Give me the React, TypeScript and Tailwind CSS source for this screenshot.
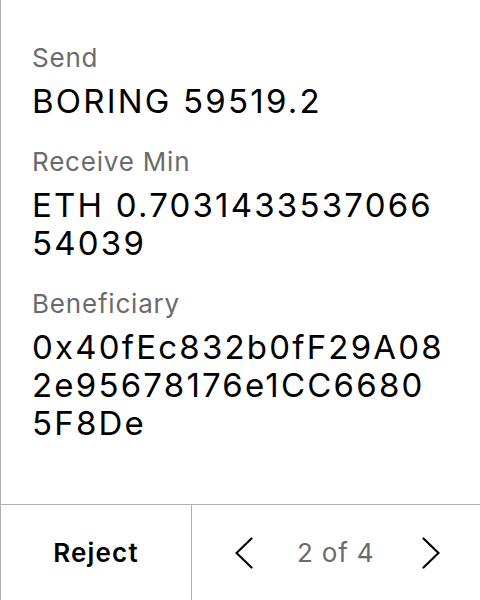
import React from "react";

function Field({ label, lines }: { label: string; lines: string[] }) {
  return (
    <div className="flex flex-col">
      <div className="text-[26px] leading-[31px] tracking-[0.8px] text-[#6b6b6b]">{label}</div>
      <div className="mt-[9px] text-[33px] leading-[38px] tracking-[2.2px] text-black">
        {lines.map((l) => (
          <div key={l}>{l}</div>
        ))}
      </div>
    </div>
  );
}

export default function App() {
  return (
    <div
      className="w-[480px] h-[600px] bg-white border-l border-[#b0b0b0] flex flex-col"
      style={{ fontFamily: "Inter, 'Noto Sans', sans-serif" }}
    >
      <div className="flex-1 flex flex-col gap-[26px] pl-[31px] pr-[20px] pt-[42px]">
        <Field label="Send" lines={["BORING 59519.2"]} />
        <Field label="Receive Min" lines={["ETH 0.7031433537066", "54039"]} />
        <Field label="Beneficiary" lines={["0x40fEc832b0fF29A08", "2e95678176e1CC6680", "5F8De"]} />
      </div>
      <div className="h-[96px] border-t border-[#b0b0b0] flex">
        <button className="w-[191px] h-full flex items-center justify-center text-[26px] font-semibold tracking-[1.2px] text-black border-r border-[#b0b0b0]">
          Reject
        </button>
        <div className="flex-1 flex items-center pl-[43px]">
          <svg width="18" height="32" viewBox="0 0 18 32" fill="none">
            <polyline points="16.5,1.5 1.5,16 16.5,30.5" stroke="black" strokeWidth="2.2" strokeLinecap="round" strokeLinejoin="miter" />
          </svg>
          <span className="ml-[44px] text-[26px] tracking-[0.8px] text-[#6b6b6b]">2 of 4</span>
          <svg className="ml-[48px]" width="18" height="32" viewBox="0 0 18 32" fill="none">
            <polyline points="1.5,1.5 16.5,16 1.5,30.5" stroke="black" strokeWidth="2.2" strokeLinecap="round" strokeLinejoin="miter" />
          </svg>
        </div>
      </div>
    </div>
  );
}
